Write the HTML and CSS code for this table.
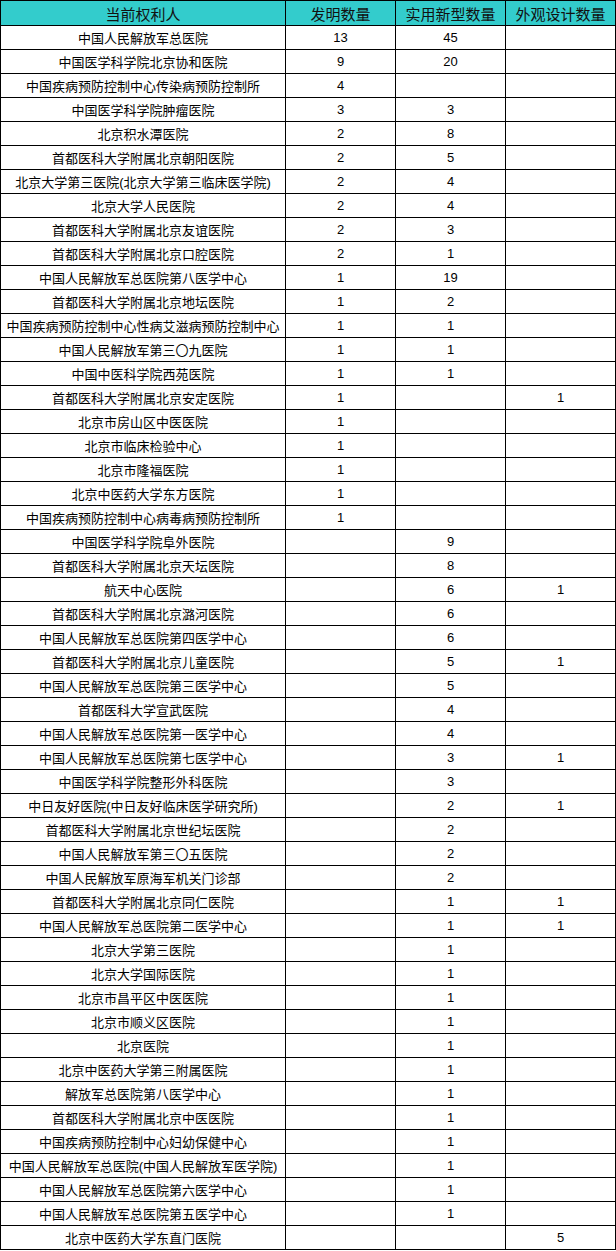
FILE: index.html
```html
<!DOCTYPE html>
<html lang="zh-CN">
<head>
<meta charset="utf-8">
<title>当前权利人专利数量</title>
<link rel="stylesheet" href="styles.css">
</head>
<body>
<div class="grid">
  <div class="th">当前权利人</div><div class="th">发明数量</div><div class="th">实用新型数量</div><div class="th">外观设计数量</div>
  <div class="td">中国人民解放军总医院</div><div class="td">13</div><div class="td">45</div><div class="td"></div>
  <div class="td">中国医学科学院北京协和医院</div><div class="td">9</div><div class="td">20</div><div class="td"></div>
  <div class="td">中国疾病预防控制中心传染病预防控制所</div><div class="td">4</div><div class="td"></div><div class="td"></div>
  <div class="td">中国医学科学院肿瘤医院</div><div class="td">3</div><div class="td">3</div><div class="td"></div>
  <div class="td">北京积水潭医院</div><div class="td">2</div><div class="td">8</div><div class="td"></div>
  <div class="td">首都医科大学附属北京朝阳医院</div><div class="td">2</div><div class="td">5</div><div class="td"></div>
  <div class="td">北京大学第三医院(北京大学第三临床医学院)</div><div class="td">2</div><div class="td">4</div><div class="td"></div>
  <div class="td">北京大学人民医院</div><div class="td">2</div><div class="td">4</div><div class="td"></div>
  <div class="td">首都医科大学附属北京友谊医院</div><div class="td">2</div><div class="td">3</div><div class="td"></div>
  <div class="td">首都医科大学附属北京口腔医院</div><div class="td">2</div><div class="td">1</div><div class="td"></div>
  <div class="td">中国人民解放军总医院第八医学中心</div><div class="td">1</div><div class="td">19</div><div class="td"></div>
  <div class="td">首都医科大学附属北京地坛医院</div><div class="td">1</div><div class="td">2</div><div class="td"></div>
  <div class="td">中国疾病预防控制中心性病艾滋病预防控制中心</div><div class="td">1</div><div class="td">1</div><div class="td"></div>
  <div class="td">中国人民解放军第三〇九医院</div><div class="td">1</div><div class="td">1</div><div class="td"></div>
  <div class="td">中国中医科学院西苑医院</div><div class="td">1</div><div class="td">1</div><div class="td"></div>
  <div class="td">首都医科大学附属北京安定医院</div><div class="td">1</div><div class="td"></div><div class="td">1</div>
  <div class="td">北京市房山区中医医院</div><div class="td">1</div><div class="td"></div><div class="td"></div>
  <div class="td">北京市临床检验中心</div><div class="td">1</div><div class="td"></div><div class="td"></div>
  <div class="td">北京市隆福医院</div><div class="td">1</div><div class="td"></div><div class="td"></div>
  <div class="td">北京中医药大学东方医院</div><div class="td">1</div><div class="td"></div><div class="td"></div>
  <div class="td">中国疾病预防控制中心病毒病预防控制所</div><div class="td">1</div><div class="td"></div><div class="td"></div>
  <div class="td">中国医学科学院阜外医院</div><div class="td"></div><div class="td">9</div><div class="td"></div>
  <div class="td">首都医科大学附属北京天坛医院</div><div class="td"></div><div class="td">8</div><div class="td"></div>
  <div class="td">航天中心医院</div><div class="td"></div><div class="td">6</div><div class="td">1</div>
  <div class="td">首都医科大学附属北京潞河医院</div><div class="td"></div><div class="td">6</div><div class="td"></div>
  <div class="td">中国人民解放军总医院第四医学中心</div><div class="td"></div><div class="td">6</div><div class="td"></div>
  <div class="td">首都医科大学附属北京儿童医院</div><div class="td"></div><div class="td">5</div><div class="td">1</div>
  <div class="td">中国人民解放军总医院第三医学中心</div><div class="td"></div><div class="td">5</div><div class="td"></div>
  <div class="td">首都医科大学宣武医院</div><div class="td"></div><div class="td">4</div><div class="td"></div>
  <div class="td">中国人民解放军总医院第一医学中心</div><div class="td"></div><div class="td">4</div><div class="td"></div>
  <div class="td">中国人民解放军总医院第七医学中心</div><div class="td"></div><div class="td">3</div><div class="td">1</div>
  <div class="td">中国医学科学院整形外科医院</div><div class="td"></div><div class="td">3</div><div class="td"></div>
  <div class="td">中日友好医院(中日友好临床医学研究所)</div><div class="td"></div><div class="td">2</div><div class="td">1</div>
  <div class="td">首都医科大学附属北京世纪坛医院</div><div class="td"></div><div class="td">2</div><div class="td"></div>
  <div class="td">中国人民解放军第三〇五医院</div><div class="td"></div><div class="td">2</div><div class="td"></div>
  <div class="td">中国人民解放军原海军机关门诊部</div><div class="td"></div><div class="td">2</div><div class="td"></div>
  <div class="td">首都医科大学附属北京同仁医院</div><div class="td"></div><div class="td">1</div><div class="td">1</div>
  <div class="td">中国人民解放军总医院第二医学中心</div><div class="td"></div><div class="td">1</div><div class="td">1</div>
  <div class="td">北京大学第三医院</div><div class="td"></div><div class="td">1</div><div class="td"></div>
  <div class="td">北京大学国际医院</div><div class="td"></div><div class="td">1</div><div class="td"></div>
  <div class="td">北京市昌平区中医医院</div><div class="td"></div><div class="td">1</div><div class="td"></div>
  <div class="td">北京市顺义区医院</div><div class="td"></div><div class="td">1</div><div class="td"></div>
  <div class="td">北京医院</div><div class="td"></div><div class="td">1</div><div class="td"></div>
  <div class="td">北京中医药大学第三附属医院</div><div class="td"></div><div class="td">1</div><div class="td"></div>
  <div class="td">解放军总医院第八医学中心</div><div class="td"></div><div class="td">1</div><div class="td"></div>
  <div class="td">首都医科大学附属北京中医医院</div><div class="td"></div><div class="td">1</div><div class="td"></div>
  <div class="td">中国疾病预防控制中心妇幼保健中心</div><div class="td"></div><div class="td">1</div><div class="td"></div>
  <div class="td">中国人民解放军总医院(中国人民解放军医学院)</div><div class="td"></div><div class="td">1</div><div class="td"></div>
  <div class="td">中国人民解放军总医院第六医学中心</div><div class="td"></div><div class="td">1</div><div class="td"></div>
  <div class="td">中国人民解放军总医院第五医学中心</div><div class="td"></div><div class="td">1</div><div class="td"></div>
  <div class="td">北京中医药大学东直门医院</div><div class="td"></div><div class="td"></div><div class="td">5</div>
</div>
</body>
</html>
```

FILE: styles.css
```css
html, body {
  margin: 0;
  padding: 0;
  background: #ffffff;
}

.grid {
  display: grid;
  grid-template-columns: 284px 109px 109px 109px;
  grid-template-rows: 24px;
  grid-auto-rows: 23px;
  gap: 1px;
  padding: 1px;
  width: 616px;
  box-sizing: border-box;
  background: #000000;
  font-family: "Liberation Sans", "Noto Sans CJK SC", sans-serif;
}

.th,
.td {
  display: flex;
  align-items: center;
  justify-content: center;
  white-space: nowrap;
  overflow: hidden;
}

.th {
  background: #33cccc;
  color: #111111;
  font-size: 15px;
}

.td {
  background: #ffffff;
  color: #000000;
  font-size: 13px;
}
```
